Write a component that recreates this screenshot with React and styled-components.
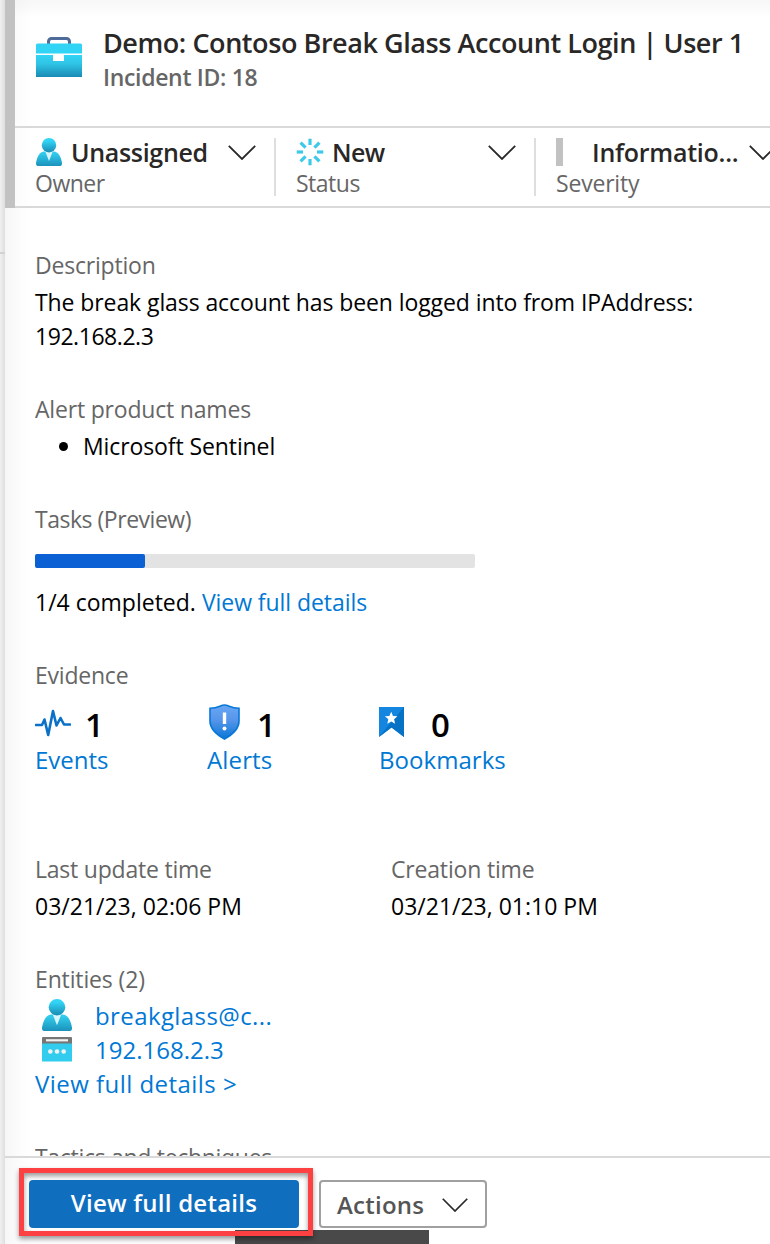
import React from 'react';
import styled, { createGlobalStyle } from 'styled-components';

const GlobalStyle = createGlobalStyle`
  * { box-sizing: border-box; }
  body {
    margin: 0;
    background: #fff;
    font-family: "Open Sans", "Noto Sans", sans-serif;
    overflow: hidden;
  }
`;

const Screen = styled.div`
  display: flex;
  width: 770px;
  height: 1244px;
  overflow: hidden;
`;

const PageEdge = styled.div`
  flex: none;
  width: 5px;
  padding-top: 252px;
  background: linear-gradient(90deg, #f0f0f0, #dedede);
`;

const EdgeRule = styled.div`
  height: 2px;
  background: #d2d2d2;
`;

const Panel = styled.main`
  position: relative;
  flex: 1;
  min-width: 0;
  display: flex;
  flex-direction: column;
  background: linear-gradient(90deg, #f6f6f6 0, #fcfcfc 14px, #fff 26px);
`;

const Top = styled.header`
  flex: none;
  height: 208px;
  border-left: 10px solid #c2c2c2;
  background:
    linear-gradient(180deg, rgba(0, 0, 0, 0.03) 0, rgba(0, 0, 0, 0) 18px),
    linear-gradient(90deg, #fbfbfb 0, #fff 18px);
`;

const TitleRow = styled.div`
  display: flex;
  height: 128px;
  padding: 25px 0 0 20px;
  border-bottom: 2px solid #d9d9d9;
`;

const BriefcaseSlot = styled.div`
  width: 48px;
  margin: 11px 20px 0 0;
`;

const Text = styled.div`
  font-size: ${(p) => p.$size || 23}px;
  line-height: ${(p) => p.$line || 34}px;
  font-weight: ${(p) => p.$weight || 400};
  color: ${(p) => p.$color || '#000'};
  letter-spacing: ${(p) => p.$track || 0}px;
  white-space: nowrap;
`;

const Label = styled(Text)`
  color: #666;
`;

const Link = styled(Text).attrs({ as: 'a' })`
  display: ${(p) => (p.$inline ? 'inline' : 'block')};
  color: #0078d4;
`;

const Properties = styled.div`
  display: flex;
  height: 80px;
  padding: 10px 0;
  border-bottom: 2px solid #d9d9d9;
`;

const Property = styled.div`
  flex: none;
  width: ${(p) => p.$width}px;
  padding-left: 20px;
  ${(p) => p.$divided && 'border-right: 2px solid #dedede;'}
`;

const PropertyValue = styled.div`
  display: flex;
  align-items: center;
  height: 28px;
`;

const IconSlot = styled.div`
  flex: none;
  display: flex;
  width: ${(p) => p.$width}px;
  padding-left: ${(p) => p.$inset || 0}px;
`;

const ValueText = styled(Text)`
  flex: none;
  width: ${(p) => p.$width}px;
`;

const SeverityMark = styled.span`
  width: 7px;
  height: 28px;
  background: #c2c2c2;
`;

const Content = styled.div`
  flex: none;
  height: 948px;
  padding: 40px 20px 0 30px;
  overflow: hidden;
`;

const Section = styled.section`
  margin-bottom: ${(p) => p.$gap || 39}px;
`;

const ValueBlock = styled.div`
  margin-top: 3px;
`;

const ProductList = styled.ul`
  margin: 3px 0 0;
  padding: 0;
  list-style: none;
`;

const Product = styled.li`
  display: flex;
  align-items: center;
  padding-left: 24px;
  gap: 15px;

  &::before {
    content: '';
    width: 9px;
    height: 9px;
    border-radius: 50%;
    background: #000;
  }
`;

const Progress = styled.div`
  width: 440px;
  height: 14px;
  margin: 18px 0 17px;
  border-radius: 2px;
  background: #e3e3e3;
`;

const ProgressFill = styled.div`
  width: ${(p) => p.$percent}%;
  height: 100%;
  border-radius: 2px;
  background: #0b61d3;
`;

const EvidenceRow = styled.div`
  display: flex;
  margin-top: 9px;
`;

const EvidenceItem = styled.div`
  width: 172px;
`;

const EvidenceCount = styled.div`
  display: flex;
  align-items: center;
  height: 42px;
`;

const CountText = styled(Text)`
  padding-top: 5px;
`;

const TimeRow = styled.div`
  display: flex;
`;

const TimeCell = styled.div`
  width: 356px;
`;

const EntityRow = styled.div`
  display: flex;
  align-items: center;
  height: 34px;
`;

const EntityIcon = styled(IconSlot)`
  padding: 0 0 2px 7px;
`;

const Footer = styled.footer`
  flex: none;
  display: flex;
  gap: 6px;
  height: 88px;
  padding: 10px 0 0 14px;
  border-top: 2px solid #d9d9d9;
`;

const Highlight = styled.div`
  position: relative;
  z-index: 2;
  width: 294px;
  height: 68px;
  padding: 7px 5px;
  border: 5px solid #fd4143;
  box-shadow: 0 3px 5px rgba(0, 0, 0, 0.4), inset 0 3px 5px rgba(0, 0, 0, 0.4);
`;

const PrimaryButton = styled.button`
  display: block;
  width: 270px;
  height: 48px;
  padding: 0 0 2px;
  border: 0;
  border-radius: 4px;
  background: #106ebe;
  font-family: inherit;
`;

const ActionsButton = styled.button`
  display: flex;
  align-items: center;
  gap: 18px;
  width: 168px;
  height: 48px;
  margin-top: 12px;
  padding: 1px 0 0 16px;
  border: 2px solid #a0a0a0;
  border-radius: 4px;
  background: #fff;
  font-family: inherit;
`;

const StatusStrip = styled.div`
  position: absolute;
  z-index: 1;
  left: 230px;
  bottom: 0;
  width: 194px;
  height: 14px;
  background: #494949;
`;

const ChevronIcon = styled.svg`
  flex: none;
`;

const Chevron = ({ width = 28, height = 15 }) => (
  <ChevronIcon width={width} height={height} viewBox="0 0 28 15" fill="none">
    <path d="M.8.8 14 14 27.2.8" stroke="#292827" strokeWidth="1.8" />
  </ChevronIcon>
);

const Briefcase = () => (
  <svg width="48" height="42" viewBox="0 0 48 42">
    <defs>
      <linearGradient id="case" x1="0" y1="0" x2="0" y2="1">
        <stop offset="0" stopColor="#32d4f5" />
        <stop offset=".4" stopColor="#2fc4e6" />
        <stop offset="1" stopColor="#198ab3" />
      </linearGradient>
    </defs>
    <path d="M13.500 8V5.500a3 3 0 0 1 3-3h15a3 3 0 0 1 3 3V8" fill="none" stroke="#4f6b9a" strokeWidth="3" />
    <path d="M2.500 7.500h43A1.500 1.500 0 0 1 47 9v8.500H1V9a1.500 1.500 0 0 1 1.500-1.500z" fill="#32d4f5" />
    <path d="M1 19h17v6h11v-6h18v22H1z" fill="url(#case)" />
  </svg>
);

const Person = ({ id, width, height }) => (
  <svg width={width} height={height} viewBox="0 0 26 28" preserveAspectRatio="none">
    <defs>
      <linearGradient id={`${id}-head`} x1="0" y1="0" x2="0" y2="1">
        <stop offset="0.2" stopColor="#32d4f5" />
        <stop offset="1" stopColor="#198ab3" />
      </linearGradient>
      <linearGradient id={`${id}-body`} x1="0" y1="0" x2="0" y2="1">
        <stop offset="0.1" stopColor="#32cdee" />
        <stop offset="1" stopColor="#1b92bb" />
      </linearGradient>
    </defs>
    <path
      d="M8 13.500h10c4 0 7 5 8 11.500.2 1.700-.6 3-2.400 3H2.400C.6 28-.2 26.700 0 25 1 18.500 4 13.500 8 13.500z"
      fill={`url(#${id}-body)`}
    />
    <path d="M9.500 14h7L13 23z" fill="#d9f6fc" />
    <circle cx="13" cy="7.200" r="7.200" fill={`url(#${id}-head)`} />
  </svg>
);

const NewStatus = () => (
  <svg width="28" height="28" viewBox="0 0 28 28">
    {[0, 45, 90, 135, 180, 225, 270, 315].map((angle) => (
      <path
        key={angle}
        d={angle % 90 ? 'M14 .7v7' : 'M14 .7v6.300'}
        stroke="#3cc9ea"
        strokeWidth="3.200"
        transform={`rotate(${angle} 14 14)`}
      />
    ))}
  </svg>
);

const Pulse = () => (
  <svg width="36" height="30" viewBox="0 0 36 30">
    <path
      d="M1 18h6l2.500-5.500 3.700 15.500L18 4l3.500 14.500 4-7.500 3.500 6.500h6"
      fill="none"
      stroke="#0a70c8"
      strokeWidth="2.600"
      strokeLinecap="round"
      strokeLinejoin="round"
    />
  </svg>
);

const Shield = () => (
  <svg width="31" height="36" viewBox="0 0 31 36">
    <defs>
      <linearGradient id="shield" x1="0" y1="0" x2="0" y2="1">
        <stop offset="0" stopColor="#6aa6f4" />
        <stop offset="0.45" stopColor="#5595ea" />
        <stop offset="1" stopColor="#0877d6" />
      </linearGradient>
    </defs>
    <path
      d="M15.500 1C20 1 21 4.200 30 4.200V17c0 9-8 14.500-14.500 18C9 31.500 1 26 1 17V4.200C10 4.200 11 1 15.500 1z"
      fill="url(#shield)"
      stroke="#0877d6"
      strokeWidth="1.600"
    />
    <path d="M15.500 8.500v11.500" stroke="#fff" strokeWidth="3.400" />
    <circle cx="15.500" cy="24.500" r="2" fill="#fff" />
  </svg>
);

const Bookmark = () => (
  <svg width="25" height="30" viewBox="0 0 25 30">
    <path d="M0 0h25v30L12.500 20.500 0 30z" fill="#1486df" />
    <path d="M25 0v30L12.500 20.500 0 30z" fill="#0572c6" />
    <path
      d="M12.200 4.800l1.800 4.100 4.500.4-3.400 3 1 4.400-3.900-2.300-3.900 2.300 1-4.400-3.400-3 4.500-.4z"
      fill="#fff"
    />
  </svg>
);

const Device = () => (
  <svg width="30" height="25" viewBox="0 0 30 25">
    <path d="M0 6h30v18.500H0z" fill="#32cdee" />
    <path d="M1 0h28a1 1 0 0 1 1 1v5.500H0V1a1 1 0 0 1 1-1z" fill="#767676" />
    <path d="M4 2.200h22v2.200H4z" fill="#f2f2f2" />
    <circle cx="8.300" cy="14.500" r="2.300" fill="#f2f2f2" />
    <circle cx="15" cy="14.500" r="2.300" fill="#f2f2f2" />
    <circle cx="21.700" cy="14.500" r="2.300" fill="#f2f2f2" />
  </svg>
);

const evidence = [
  { label: 'Events', count: '1', icon: <Pulse />, slot: 50, track: 0 },
  { label: 'Alerts', count: '1', icon: <Shield />, slot: 50, track: 0.15, inset: 2 },
  { label: 'Bookmarks', count: '0', icon: <Bookmark />, slot: 52, track: 0.05 },
];

export default function App() {
  return (
    <Screen>
      <GlobalStyle />
      <PageEdge>
        <EdgeRule />
      </PageEdge>
      <Panel>
        <Top>
          <TitleRow>
            <BriefcaseSlot>
              <Briefcase />
            </BriefcaseSlot>
            <div>
              <Text $size={27} $line={35} $weight={600} $color="#292827" $track={-0.43}>
                Demo: Contoso Break Glass Account Login | User 1
              </Text>
              <Text $weight={600} $color="#666" $track={-0.32}>
                Incident ID: 18
              </Text>
            </div>
          </TitleRow>
          <Properties>
            <Property $width={261} $divided>
              <PropertyValue>
                <IconSlot $width={36} $inset={1}>
                  <Person id="owner" width={26} height={28} />
                </IconSlot>
                <ValueText $size={25} $weight={600} $color="#292827" $track={-0.32} $width={157}>
                  Unassigned
                </ValueText>
                <Chevron />
              </PropertyValue>
              <Label $track={-0.5}>Owner</Label>
            </Property>
            <Property $width={260} $divided>
              <PropertyValue>
                <IconSlot $width={36}>
                  <NewStatus />
                </IconSlot>
                <ValueText $size={25} $weight={600} $color="#292827" $track={-0.6} $width={156}>
                  New
                </ValueText>
                <Chevron />
              </PropertyValue>
              <Label $track={-0.5}>Status</Label>
            </Property>
            <Property $width={260}>
              <PropertyValue>
                <IconSlot $width={36}>
                  <SeverityMark />
                </IconSlot>
                <ValueText $size={25} $weight={600} $color="#292827" $track={-0.25} $width={157}>
                  Informatio...
                </ValueText>
                <Chevron />
              </PropertyValue>
              <Label $track={-0.2}>Severity</Label>
            </Property>
          </Properties>
        </Top>

        <Content>
          <Section>
            <Label $track={-0.2}>Description</Label>
            <ValueBlock>
              <Text $track={-0.09}>The break glass account has been logged into from IPAddress:</Text>
              <Text $track={-0.45}>192.168.2.3</Text>
            </ValueBlock>
          </Section>

          <Section>
            <Label $track={-0.19}>Alert product names</Label>
            <ProductList>
              <Product>
                <Text $track={-0.1}>Microsoft Sentinel</Text>
              </Product>
            </ProductList>
          </Section>

          <Section>
            <Label $track={-0.48}>Tasks (Preview)</Label>
            <Progress>
              <ProgressFill $percent={25} />
            </Progress>
            <Text $track={0}>
              1/4 completed.{' '}
              <Link $inline $track={-0.06}>
                View full details
              </Link>
            </Text>
          </Section>

          <Section $gap={75}>
            <Label $track={-0.22}>Evidence</Label>
            <EvidenceRow>
              {evidence.map((item) => (
                <EvidenceItem key={item.label}>
                  <EvidenceCount>
                    <IconSlot $width={item.slot} $inset={item.inset}>
                      {item.icon}
                    </IconSlot>
                    <CountText $size={33} $line={42} $weight={600}>
                      {item.count}
                    </CountText>
                  </EvidenceCount>
                  <Link $size={24} $track={item.track}>
                    {item.label}
                  </Link>
                </EvidenceItem>
              ))}
            </EvidenceRow>
          </Section>

          <Section>
            <TimeRow>
              <TimeCell>
                <Label $track={-0.22}>Last update time</Label>
                <ValueBlock>
                  <Text>03/21/23, 02:06 PM</Text>
                </ValueBlock>
              </TimeCell>
              <TimeCell>
                <Label $track={-0.18}>Creation time</Label>
                <ValueBlock>
                  <Text>03/21/23, 01:10 PM</Text>
                </ValueBlock>
              </TimeCell>
            </TimeRow>
          </Section>

          <Section>
            <Label $track={-0.14}>Entities (2)</Label>
            <ValueBlock>
              <EntityRow>
                <EntityIcon $width={60}>
                  <Person id="account" width={30} height={32} />
                </EntityIcon>
                <Link $size={24} $track={0.4}>
                  breakglass@c...
                </Link>
              </EntityRow>
              <EntityRow>
                <EntityIcon $width={60}>
                  <Device />
                </EntityIcon>
                <Link $size={24} $track={0}>
                  192.168.2.3
                </Link>
              </EntityRow>
              <Link $size={24} $track={0.46}>
                View full details &gt;
              </Link>
            </ValueBlock>
          </Section>

          <Section>
            <Label $track={-0.3}>Tactics and techniques</Label>
          </Section>
        </Content>

        <Footer>
          <Highlight>
            <PrimaryButton>
              <Text as="span" $size={24} $weight={600} $color="#fff" $track={0.25}>
                View full details
              </Text>
            </PrimaryButton>
          </Highlight>
          <ActionsButton>
            <Text as="span" $size={24} $weight={600} $color="#555" $track={0.25}>
              Actions
            </Text>
            <Chevron width={26} height={14} />
          </ActionsButton>
        </Footer>
        <StatusStrip />
      </Panel>
    </Screen>
  );
}
